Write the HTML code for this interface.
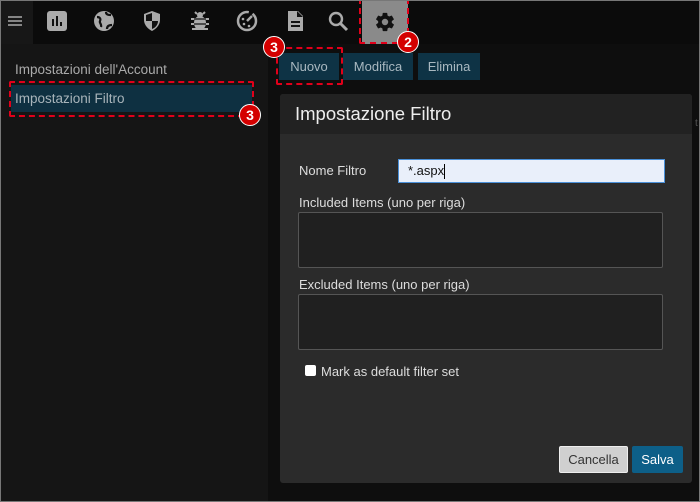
<!DOCTYPE html>
<html><head><meta charset="utf-8"><style>
*{box-sizing:border-box;margin:0;padding:0}
body{width:700px;height:502px;overflow:hidden;background:#0e0e0e;font-family:"Liberation Sans",sans-serif;position:relative}
.abs{position:absolute}
.top{left:0;top:0;width:700px;height:44px;background:#0b0b0b}
.ham{left:0;top:0;width:33px;height:44px;background:#171717}
.ico{top:10px;width:22px;height:22px}
.left{left:0;top:44px;width:268px;height:458px;background:#151515}
.btn{top:53px;height:27px;background:#0e3345;color:#a9b8c0;font-size:13px;line-height:27px;text-align:center}
.dash{border:2px dashed #e0001a;border-radius:2px}
.badge{width:22px;height:22px;border-radius:50%;background:#d40000;color:#fff;font-weight:bold;font-size:14px;line-height:20px;text-align:center;border:1px solid #fff}
.lbl{color:#ddd;font-size:13px}
.ta{background:#202020;border:1px solid #555;border-radius:2px}
</style></head><body>
<div class="abs top"></div>
<div class="abs left"></div>
<div class="abs ham"></div>
<svg class="abs" style="left:8px;top:16px" width="14" height="10"><path d="M0 1H14M0 5H14M0 9H14" stroke="#aaa" stroke-width="1.6"/></svg>
<svg class="abs ico" style="left:46px" viewBox="0 0 22 22"><rect x="1" y="1" width="20" height="20" rx="3" fill="#aaa"/><path d="M7 16V9M11 16V6M15 16V12" stroke="#111" stroke-width="2"/></svg>
<svg class="abs ico" style="left:93px" viewBox="0 0 22 22"><circle cx="11" cy="11" r="10" fill="#aaa"/><path d="M4 7c3 0 4 2 3 4s2 3 1 6M13 2c0 3 3 3 5 3M14 19c0-3 2-4 5-4" stroke="#111" stroke-width="2.2" fill="none"/></svg>
<svg class="abs ico" style="left:141px" viewBox="0 0 22 22"><path d="M11 1L19 4V10C19 15 15 19 11 21C7 19 3 15 3 10V4Z" fill="#aaa"/><path d="M11 3V11H17C17 15 14 18 11 19V11H5V5Z" fill="#111"/></svg>
<svg class="abs ico" style="left:189px" viewBox="0 0 22 22"><ellipse cx="11" cy="13" rx="6" ry="7" fill="#aaa"/><circle cx="11" cy="5" r="3" fill="#aaa"/><path d="M2 9H20M2 14H20M3 19H19M6 2L8 4M16 2L14 4" stroke="#aaa" stroke-width="2"/><path d="M5 9H17M5 14H17" stroke="#111" stroke-width="1.3"/></svg>
<svg class="abs ico" style="left:236px" viewBox="0 0 22 22"><circle cx="11" cy="11" r="9" fill="none" stroke="#aaa" stroke-width="2.5" stroke-dasharray="44 4"/><path d="M11 11L16 6" stroke="#aaa" stroke-width="2.5"/><circle cx="7" cy="9" r="1.3" fill="#aaa"/><circle cx="8" cy="14" r="1.3" fill="#aaa"/><circle cx="13" cy="16" r="1.3" fill="#aaa"/></svg>
<svg class="abs ico" style="left:284px" viewBox="0 0 22 22"><path d="M4 1H14L19 6V21H4Z" fill="#aaa"/><path d="M13 1V7H19" fill="#111"/><path d="M7 12H16M7 16H16" stroke="#111" stroke-width="2"/></svg>
<svg class="abs ico" style="left:327px" viewBox="0 0 22 22"><circle cx="9" cy="9" r="6" fill="none" stroke="#aaa" stroke-width="2.4"/><path d="M13 13L20 20" stroke="#aaa" stroke-width="3"/></svg>
<div class="abs" style="left:362px;top:0;width:46px;height:44px;background:#8a8a8a"></div>
<div class="abs dash" style="left:359px;top:-2px;width:50px;height:46px"></div>
<svg class="abs" style="left:374px;top:11px" width="22" height="22" viewBox="0 0 24 24"><path fill="#111" d="M19.4 13c.04-.3.06-.66.06-1s-.02-.7-.07-1l2.1-1.650c.2-.15.24-.42.12-.64l-2-3.46c-.12-.22-.39-.3-.61-.22l-2.49 1c-.52-.4-1.08-.73-1.690-.98l-.38-2.65A.49.49 0 0 0 14 2h-4c-.25 0-.46.18-.49.42l-.38 2.65c-.61.25-1.170.59-1.690.98l-2.49-1a.5.5 0 0 0-.61.22l-2 3.46c-.13.22-.07.49.12.64L4.57 11c-.05.34-.07.67-.07 1s.02.66.07 1l-2.11 1.65c-.19.15-.24.42-.12.64l2 3.46c.12.22.39.3.61.22l2.49-1c.52.4 1.08.73 1.69.98l.38 2.65c.03.24.24.42.49.42h4c.25 0 .46-.18.49-.42l.38-2.65c.61-.25 1.17-.58 1.69-.98l2.49 1c.23.09.49 0 .61-.22l2-3.46c.12-.22.07-.49-.12-.64zM12 15.5A3.5 3.5 0 1 1 12 8.5a3.5 3.5 0 0 1 0 7z"/></svg>
<div class="abs badge" style="left:397px;top:31px">2</div>

<div class="abs" style="left:15px;top:62px;color:#aaa;font-size:13.5px">Impostazioni dell'Account</div>
<div class="abs" style="left:11px;top:85px;width:241px;height:27px;background:#0e3041"></div>
<div class="abs" style="left:15px;top:91px;color:#a8b4ba;font-size:13.5px">Impostazioni Filtro</div>
<div class="abs dash" style="left:9px;top:81px;width:245px;height:36px"></div>
<div class="abs badge" style="left:239px;top:104px">3</div>

<div class="abs btn" style="left:279px;width:60px">Nuovo</div>
<div class="abs btn" style="left:343px;width:70px">Modifica</div>
<div class="abs btn" style="left:418px;width:62px">Elimina</div>
<div class="abs dash" style="left:276px;top:47px;width:67px;height:38px"></div>
<div class="abs badge" style="left:263px;top:36px">3</div>

<div class="abs" style="left:280px;top:94px;width:412px;height:389px;background:#2b2b2b;border-radius:3px"></div>
<div class="abs" style="left:280px;top:94px;width:412px;height:40px;background:#222;border-radius:3px 3px 0 0"></div>
<div class="abs" style="left:295px;top:103px;color:#eee;font-size:18.5px">Impostazione Filtro</div>
<div class="abs" style="left:695px;top:118px;color:#555;font-size:10px">t</div>
<div class="abs lbl" style="left:299px;top:163px">Nome Filtro</div>
<div class="abs" style="left:398px;top:159px;width:267px;height:24px;background:#e9effa;border:1px solid #4a90d9;color:#111;font-size:13px;line-height:22px;padding-left:9px">*.aspx<span style="display:inline-block;width:1px;height:15px;background:#000;vertical-align:middle"></span></div>
<div class="abs lbl" style="left:299px;top:195px">Included Items (uno per riga)</div>
<div class="abs ta" style="left:298px;top:212px;width:365px;height:56px"></div>
<div class="abs lbl" style="left:299px;top:277px">Excluded Items (uno per riga)</div>
<div class="abs ta" style="left:298px;top:294px;width:365px;height:56px"></div>
<div class="abs" style="left:305px;top:365px;width:11px;height:11px;background:#fff;border-radius:2px"></div>
<div class="abs lbl" style="left:321px;top:364px">Mark as default filter set</div>
<div class="abs" style="left:559px;top:446px;width:69px;height:27px;background:#d0d0d0;border:1px solid #eee;border-radius:2px;color:#333;font-size:13px;line-height:25px;text-align:center">Cancella</div>
<div class="abs" style="left:632px;top:446px;width:51px;height:27px;background:#0d5f88;border-radius:2px;color:#fff;font-size:13px;line-height:27px;text-align:center">Salva</div>
<div class="abs" style="left:0;top:0;width:700px;height:502px;border:1px solid #777;pointer-events:none"></div>
</body></html>
